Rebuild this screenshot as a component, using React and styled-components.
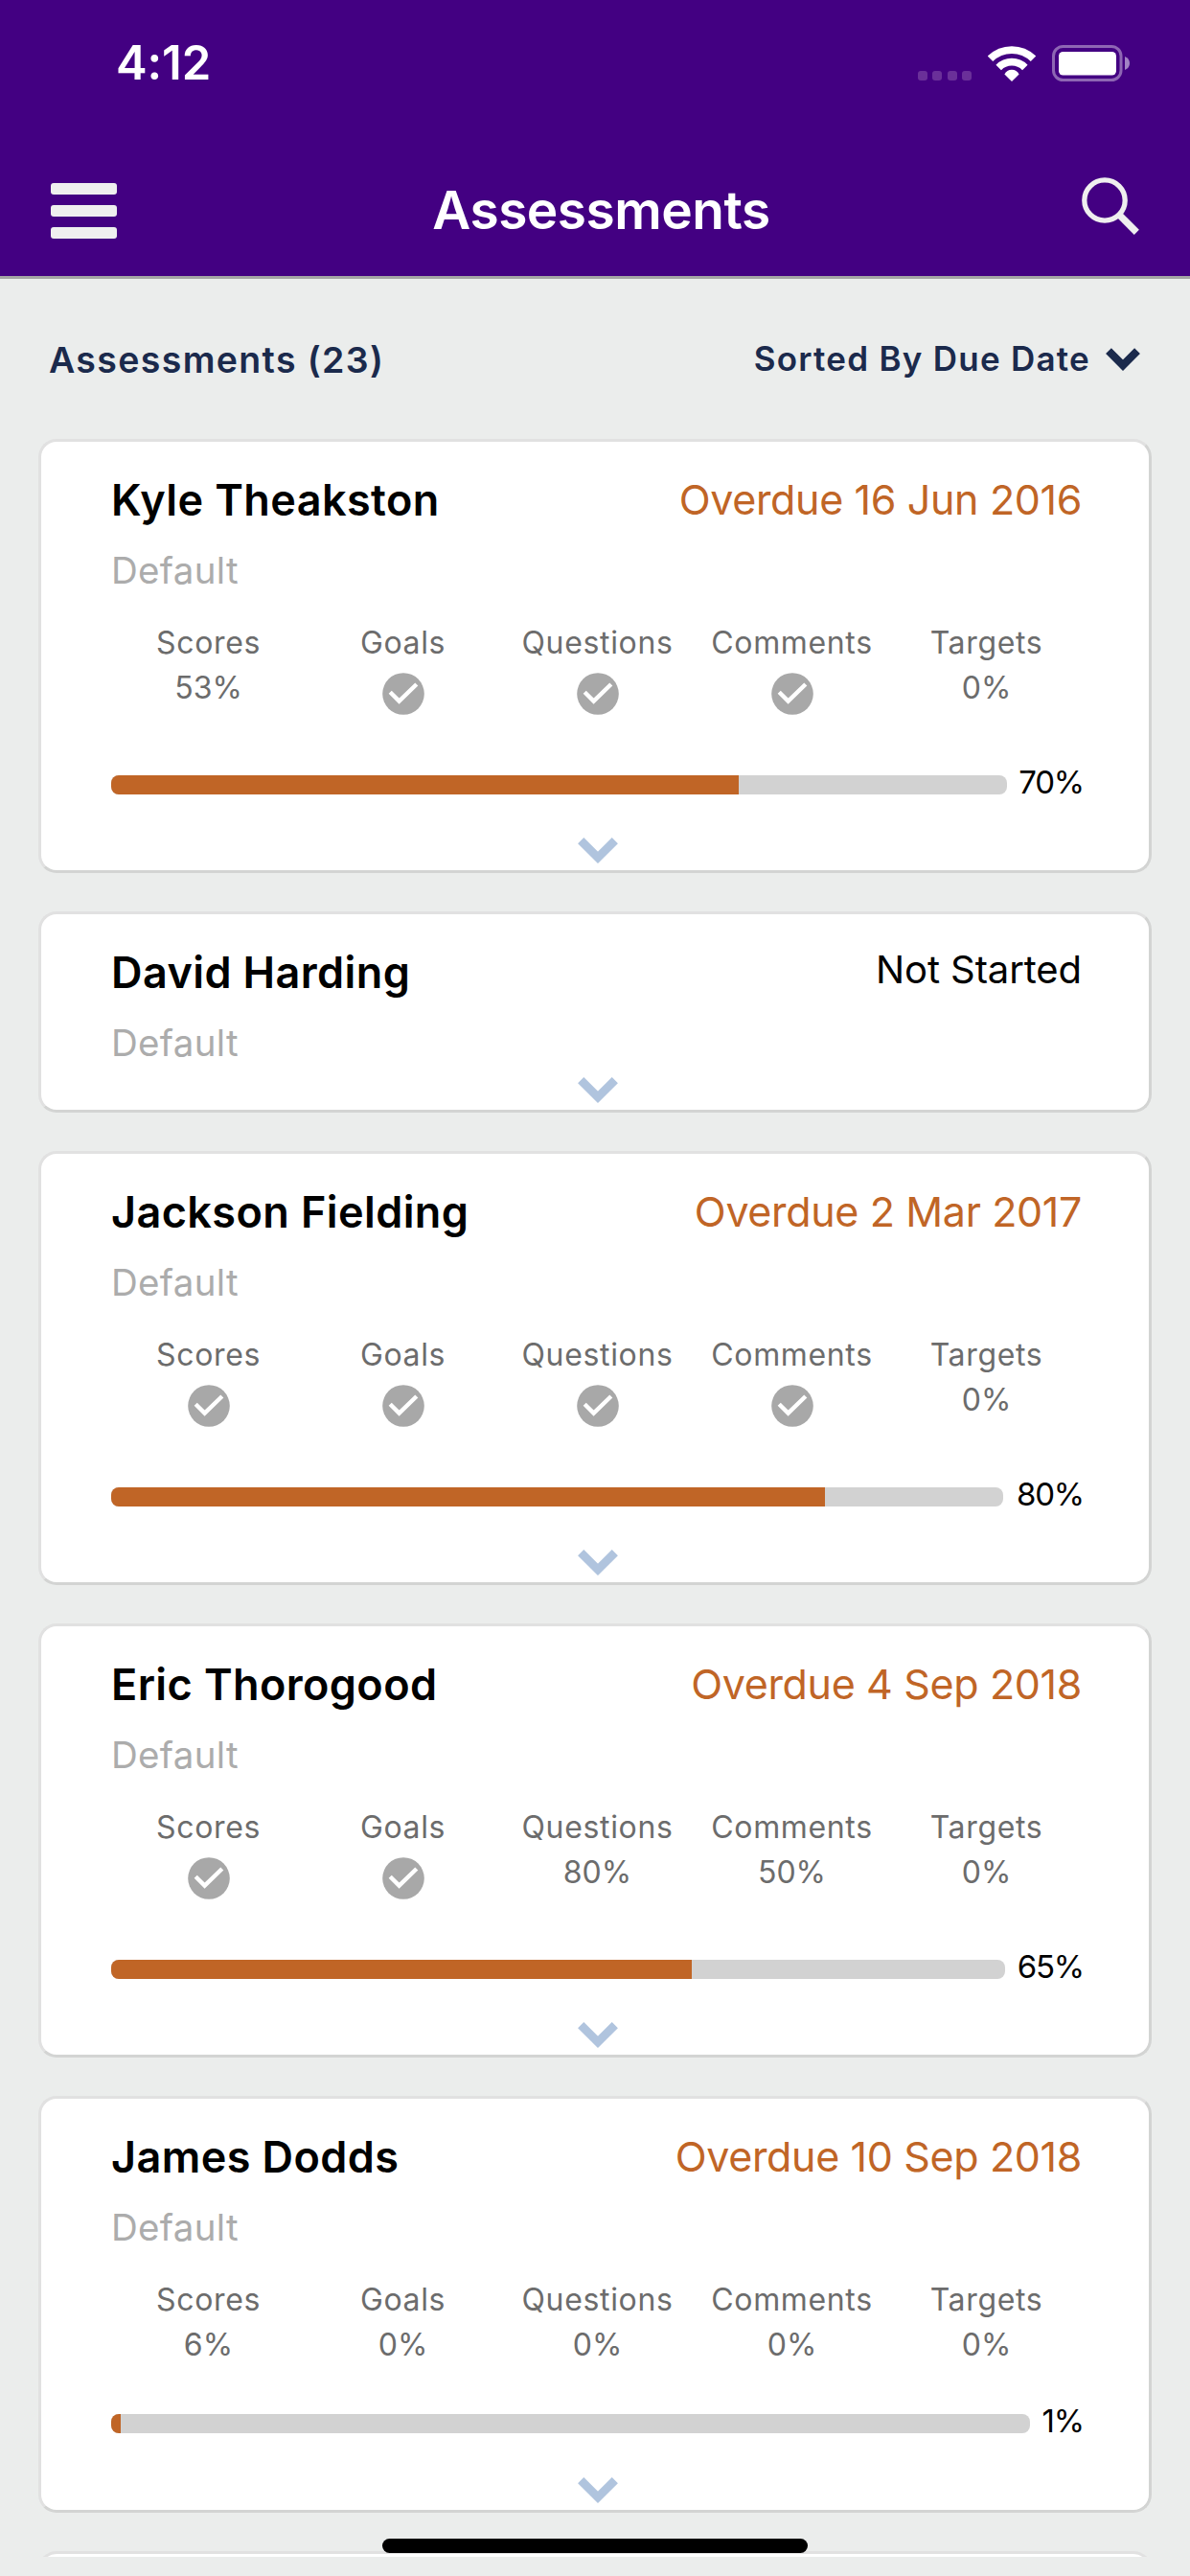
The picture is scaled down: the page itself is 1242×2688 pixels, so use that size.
import React from "react";
import styled, { createGlobalStyle } from "styled-components";

const Global = createGlobalStyle`
  *{box-sizing:border-box}
  body{margin:0;background:#ebedec;font-family:Inter,"Liberation Sans",sans-serif}
`;

const Screen = styled.div`
  width: 1242px;
  height: 2688px;
  overflow: hidden;
  display: flex;
  flex-direction: column;
  background: #ebedec;
`;

const Header = styled.header`
  flex: none;
  height: 291px;
  background: #430082;
  border-bottom: 3px solid #a5a5a5;
  color: #fff;
`;

const StatusBar = styled.div`
  height: 132px;
  padding: 0 63px 0 121px;
  display: flex;
  align-items: center;
  justify-content: space-between;
`;

const Clock = styled.span`
  font-size: 49px;
  font-weight: 600;
  line-height: 60px;
  letter-spacing: -0.1px;
`;

const StatusIcons = styled.div`
  display: flex;
  align-items: center;
  gap: 17px;
`;

const SignalDots = styled.div`
  display: flex;
  gap: 5.4px;
  padding-top: 26px;
`;

const Dot = styled.i`
  width: 10px;
  height: 10px;
  border-radius: 3px;
  background: #6a3099;
`;

const NavBar = styled.div`
  height: 156px;
  padding: 0 53px;
  display: grid;
  grid-template-columns: 70px 1fr 60px;
  align-items: center;
`;

const MenuButton = styled.div`
  display: flex;
  flex-direction: column;
  gap: 11.3px;
  width: 69px;
  padding-top: 20px;
`;

const MenuLine = styled.i`
  height: 11.6px;
  border-radius: 3px;
  background: #efefef;
`;

const Title = styled.h1`
  margin: 17px 0 0 3px;
  text-align: center;
  font-size: 55px;
  font-weight: 600;
  line-height: 66px;
  letter-spacing: -0.5px;
`;

const SearchIcon = styled.svg`
  display: block;
  margin-top: 10px;
`;

const Toolbar = styled.div`
  flex: none;
  height: 167px;
  padding: 0 52px 0 51px;
  display: flex;
  justify-content: space-between;
  align-items: center;
  color: #1b2a4c;
  font-weight: 600;
`;

const Count = styled.span`
  padding-top: 2px;
  font-size: 37.5px;
  letter-spacing: 1.35px;
`;

const Sort = styled.span`
  display: flex;
  align-items: center;
  gap: 16px;
`;

const SortLabel = styled.span`
  padding-bottom: 2px;
  font-size: 35px;
  letter-spacing: 1.25px;
`;

const List = styled.main`
  flex: none;
  height: 2210px;
  overflow: hidden;
  padding: 0 40px;
  display: flex;
  flex-direction: column;
  gap: 40px;
`;

const Card = styled.article`
  flex: none;
  height: ${(p) => p.$height}px;
  padding: 0 68px 0 73px;
  display: flex;
  flex-direction: column;
  background: #fff;
  border: 3px solid;
  border-color: #e1e1e1 #d3d4d3 #d3d4d3 #e1e1e1;
  border-radius: 19px;
`;

const CardHead = styled.div`
  flex: none;
  display: flex;
  justify-content: space-between;
  height: 96px;
  padding: 31px 2px 0 0;
`;

const Name = styled.h2`
  margin: 0;
  font-size: 45px;
  font-weight: 600;
  line-height: 60px;
  letter-spacing: 0.4px;
`;

const Status = styled.span`
  font-size: ${(p) => (p.$overdue ? 43 : 40)}px;
  line-height: ${(p) => (p.$overdue ? 58 : 54)}px;
  letter-spacing: ${(p) => (p.$overdue ? -0.35 : -0.1)}px;
  color: ${(p) => (p.$overdue ? "#c06526" : "#000")};
`;

const Template = styled.div`
  flex: 0 1 80px;
  padding-top: 12px;
  font-size: 38.5px;
  line-height: 52px;
  letter-spacing: 0.3px;
  color: #acacac;
`;

const Metrics = styled.div`
  flex: none;
  display: grid;
  grid-template-columns: repeat(5, 203px);
  height: ${(p) => p.$height}px;
  padding-top: 11px;
  color: #6c6c6c;
`;

const Metric = styled.div`
  display: flex;
  flex-direction: column;
  align-items: center;
  font-size: 32px;
`;

const MetricLabel = styled.span`
  line-height: 46px;
  letter-spacing: 0.65px;
`;

const MetricValue = styled.span`
  line-height: 47px;
`;

const CheckIcon = styled.svg`
  display: block;
  margin-top: 8px;
`;

const Progress = styled.div`
  flex: none;
  display: flex;
  align-items: center;
  height: 20px;
`;

const Track = styled.div`
  flex: 1;
  height: 20px;
  border-radius: 8px;
  overflow: hidden;
  background: #d2d2d2;
`;

const Fill = styled.div`
  height: 100%;
  width: ${(p) => p.$value}%;
  background: #c06526;
`;

const Percent = styled.span`
  width: ${(p) => p.$width}px;
  margin-top: -6px;
  text-align: right;
  font-size: 33px;
  line-height: 40px;
  letter-spacing: -1.2px;
`;

const Expand = styled.div`
  flex: none;
  display: flex;
  justify-content: center;
  margin: auto 0 7px;
`;

const HomeIndicator = styled.div`
  position: absolute;
  left: 399px;
  top: 2649px;
  width: 444px;
  height: 15px;
  border-radius: 8px;
  background: #000;
`;

const LABELS = ["Scores", "Goals", "Questions", "Comments", "Targets"];

const CARDS = [
  { name: "Kyle Theakston", status: "Overdue 16 Jun 2016", values: ["53%", true, true, true, "0%"], progress: 70, labelWidth: 80 },
  { name: "David Harding", status: "Not Started" },
  { name: "Jackson Fielding", status: "Overdue 2 Mar 2017", values: [true, true, true, true, "0%"], progress: 80, labelWidth: 84 },
  { name: "Eric Thorogood", status: "Overdue 4 Sep 2018", values: [true, true, "80%", "50%", "0%"], progress: 65, labelWidth: 82 },
  { name: "James Dodds", status: "Overdue 10 Sep 2018", values: ["6%", "0%", "0%", "0%", "0%"], progress: 1, labelWidth: 56 },
];

function Check() {
  return (
    <CheckIcon width="44" height="44" viewBox="0 0 44 44">
      <circle cx="22" cy="22" r="21.8" fill="#a8a8a8" />
      <path d="M8.2 20.2 17.6 29.6 35.8 12" fill="none" stroke="#fff" strokeWidth="4.4" />
    </CheckIcon>
  );
}

function ExpandChevron() {
  return (
    <Expand>
      <svg width="42" height="27" viewBox="0 0 42 27">
        <path d="M3.2 3.1 21 20.8 38.8 3.1" fill="none" stroke="#b0c4de" strokeWidth="8.8" />
      </svg>
    </Expand>
  );
}

function AssessmentCard({ name, status, values, progress, labelWidth }) {
  const hasCheck = values && values.includes(true);
  const height = !values ? 210 : hasCheck ? 453 : 435;
  return (
    <Card $height={height}>
      <CardHead>
        <Name>{name}</Name>
        <Status $overdue={status.startsWith("Overdue")}>{status}</Status>
      </CardHead>
      <Template>Default</Template>
      {values && (
        <>
          <Metrics $height={hasCheck ? 172 : 153}>
            {LABELS.map((label, i) => (
              <Metric key={label}>
                <MetricLabel>{label}</MetricLabel>
                {values[i] === true ? <Check /> : <MetricValue>{values[i]}</MetricValue>}
              </Metric>
            ))}
          </Metrics>
          <Progress>
            <Track>
              <Fill $value={progress} />
            </Track>
            <Percent $width={labelWidth}>{progress}%</Percent>
          </Progress>
        </>
      )}
      <ExpandChevron />
    </Card>
  );
}

export default function App() {
  return (
    <Screen>
      <Global />
      <Header>
        <StatusBar>
          <Clock>4:12</Clock>
          <StatusIcons>
            <SignalDots>
              <Dot /><Dot /><Dot /><Dot />
            </SignalDots>
            <svg width="50" height="37" viewBox="0 0 50 37">
              <g fill="none" stroke="#fff">
                <path d="M2.5 13.3A32 32 0 0 1 47.5 13.3" strokeWidth="7.8" />
                <path d="M11.2 22.4A19.5 19.5 0 0 1 38.8 22.4" strokeWidth="7.8" />
              </g>
              <path d="M25 37 17.4 29.4A8.5 8.5 0 0 1 32.6 29.4Z" fill="#fff" />
            </svg>
            <svg width="81" height="38" viewBox="0 0 81 38">
              <rect x="1.5" y="1.5" width="70.5" height="35" rx="10" fill="none" stroke="#8e66b4" strokeWidth="3" />
              <rect x="7" y="7" width="60" height="24.5" rx="4.5" fill="#fff" />
              <path d="M76 12Q81 14 81 19T76 26Z" fill="#a283c4" />
            </svg>
          </StatusIcons>
        </StatusBar>
        <NavBar>
          <MenuButton>
            <MenuLine /><MenuLine /><MenuLine />
          </MenuButton>
          <Title>Assessments</Title>
          <SearchIcon width="60" height="60" viewBox="0 0 60 60">
            <circle cx="24" cy="24" r="21.2" fill="none" stroke="#efefef" strokeWidth="5.3" />
            <path d="M38 38 57.3 57.3" stroke="#efefef" strokeWidth="7.3" />
          </SearchIcon>
        </NavBar>
      </Header>
      <Toolbar>
        <Count>Assessments (23)</Count>
        <Sort>
          <SortLabel>Sorted By Due Date</SortLabel>
          <svg width="36" height="24" viewBox="0 0 36 24">
            <path d="M3 3.1 18 18.2 33 3.1" fill="none" stroke="#1b2a4c" strokeWidth="8.2" />
          </svg>
        </Sort>
      </Toolbar>
      <List>
        {CARDS.map((card) => (
          <AssessmentCard key={card.name} {...card} />
        ))}
        <Card $height={210} />
      </List>
      <HomeIndicator />
    </Screen>
  );
}
